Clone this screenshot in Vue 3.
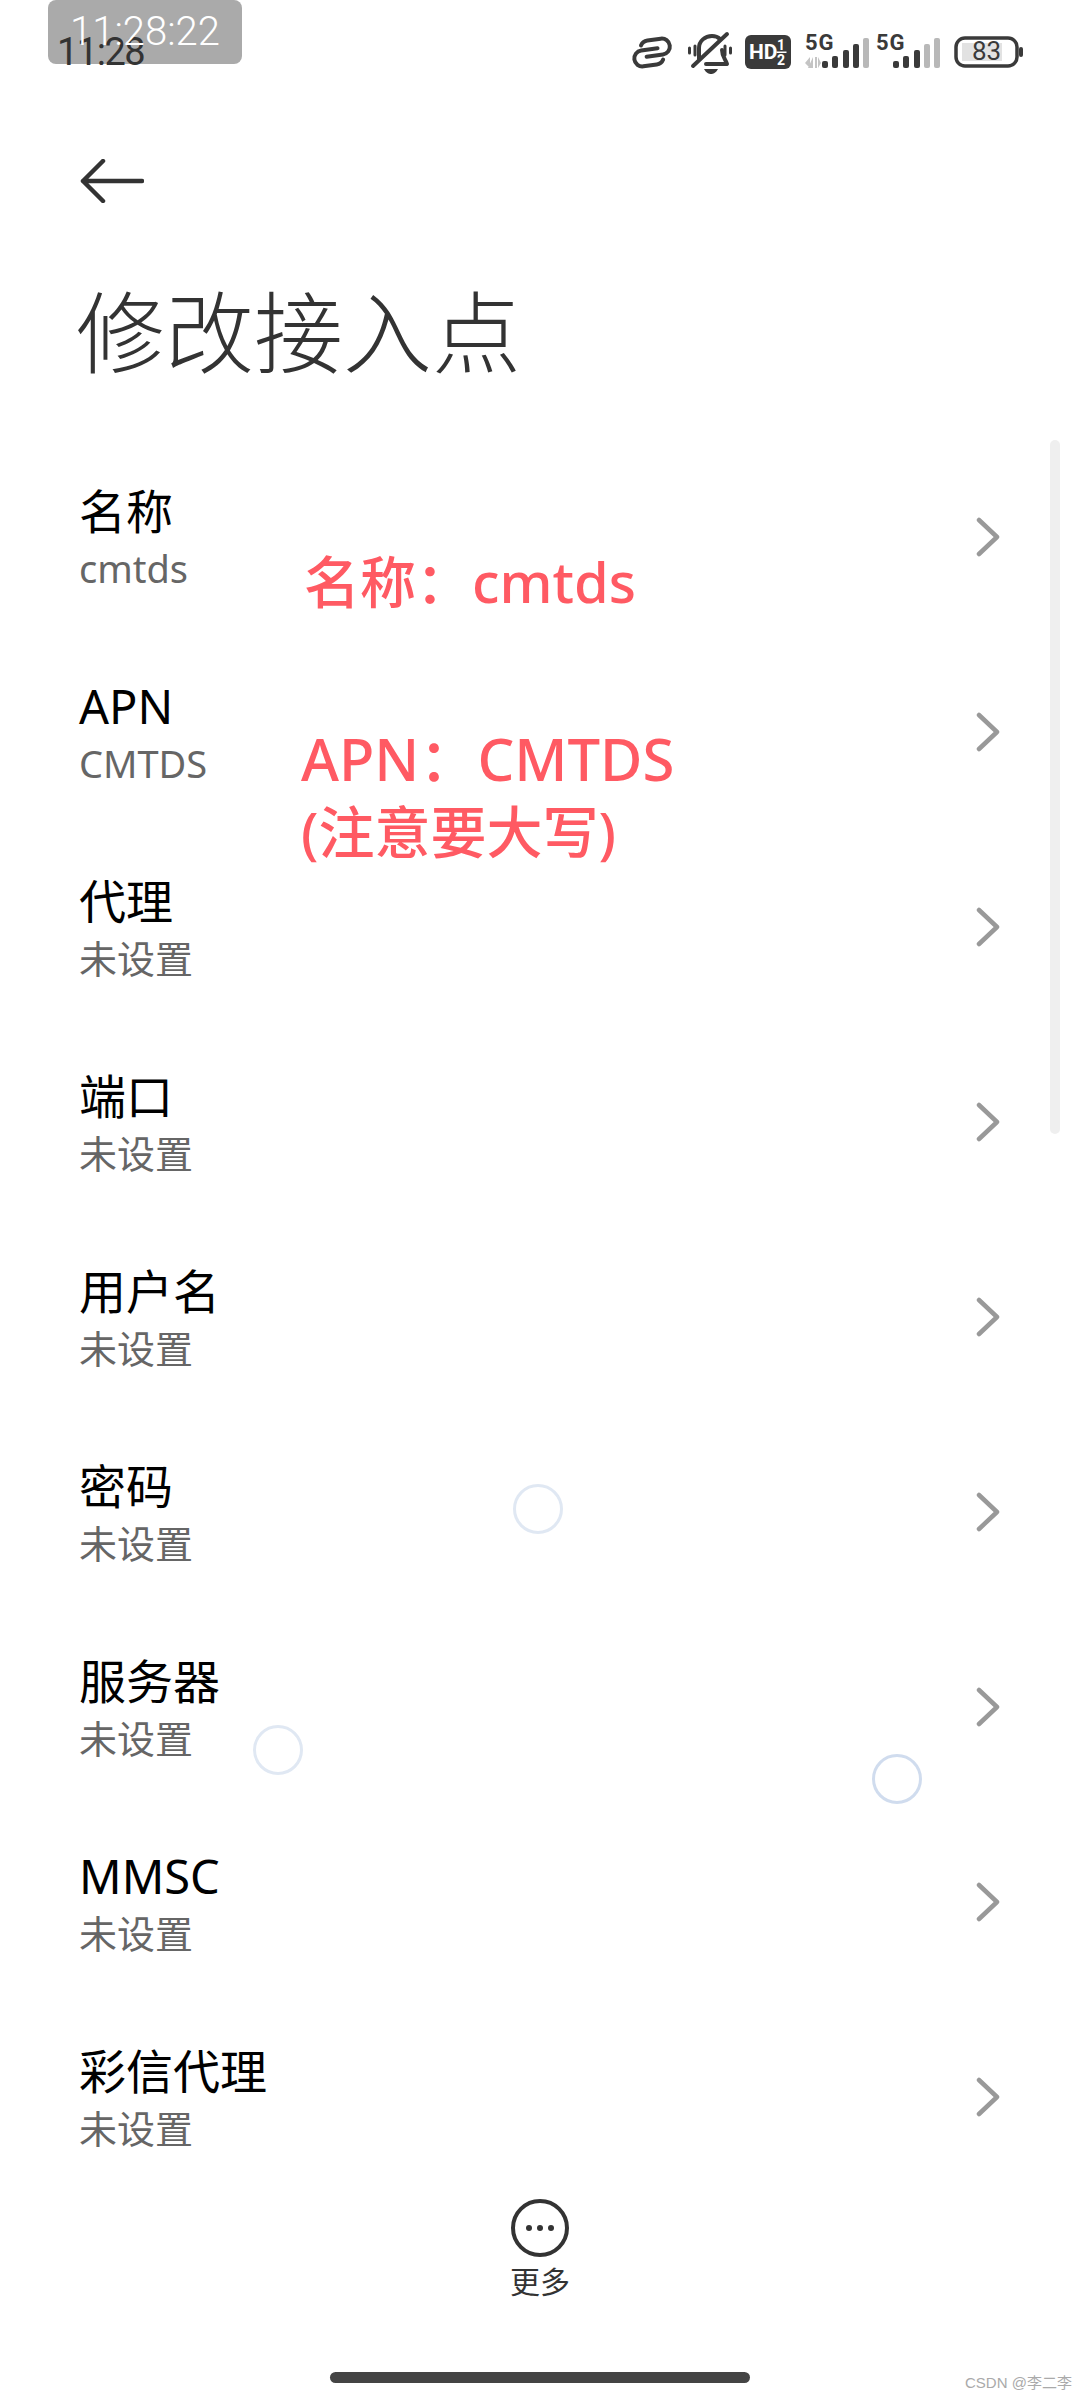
<template>
  <div class="screen">
    <div class="status">
      <span class="clock">11:28</span>
      <div class="status-icons">
        <svg width="57" height="48" viewBox="0 0 57 48" fill="none">
          <g transform="rotate(-8 21 24)" stroke="#3a3a3a" stroke-width="4" stroke-linecap="round">
            <path d="M27 21H10.500a8 8 0 0 0 0 16H24a8 8 0 0 0 7-4" />
            <path d="M15 28H31.500a8 8 0 0 0 0-16H18a8 8 0 0 0-7 4" />
          </g>
        </svg>
        <svg width="57" height="48" viewBox="0 0 57 48" fill="none">
          <g stroke="#3a3a3a" stroke-width="3" stroke-linecap="round">
            <path d="M1.500 20V25M7 18V27M37 18V27M42.500 20V25" />
          </g>
          <g stroke="#3a3a3a" stroke-width="4" stroke-linecap="round" stroke-linejoin="round">
            <path d="M11 31V20C11 13 17 8 24 8C27 8 30 9 32 11" />
            <path d="M34 22C34 29 38 32 39 36H18" />
            <path d="M5 38L39 6" />
          </g>
          <path d="M16 41H30C28 45 25 46 23 46C21 46 18 45 16 41Z" fill="#3a3a3a" />
        </svg>
        <svg width="60" height="48" viewBox="0 0 60 48">
          <rect x="0" y="7" width="46" height="34" rx="6" fill="#3a3a3a" />
          <text x="4" y="31" class="hd">HD</text>
          <text x="32" y="22" class="hd-small">1</text>
          <rect x="31.500" y="23.500" width="10" height="1.500" fill="#fff" />
          <text x="32" y="37" class="hd-small">2</text>
        </svg>
        <svg width="71" height="48" viewBox="0 0 71 48">
          <text x="0" y="22" class="five-g">5G</text>
          <path d="M5 29V40L0 35ZM8 29V40L3 40Z" fill="#c4c4c4" />
          <path d="M10 29V40H12V29ZM13 29V40L16 35Z" fill="#c4c4c4" />
          <rect
            v-for="(bar, idx) in signalBars"
            :key="idx"
            :x="bar.x"
            :y="40 - bar.h"
            width="6"
            :height="bar.h"
            rx="2"
            :fill="idx < 4 ? '#3a3a3a' : '#b8b8b8'"
          />
        </svg>
        <svg width="78" height="48" viewBox="0 0 78 48">
          <text x="0" y="22" class="five-g">5G</text>
          <rect
            v-for="(bar, idx) in signalBars"
            :key="idx"
            :x="bar.x"
            :y="40 - bar.h"
            width="6"
            :height="bar.h"
            rx="2"
            :fill="idx < 3 ? '#3a3a3a' : '#b8b8b8'"
          />
        </svg>
        <svg width="70" height="48" viewBox="0 0 70 48">
          <rect x="2" y="10" width="61" height="28" rx="9" fill="none" stroke="#3a3a3a" stroke-width="3.500" />
          <rect x="8" y="15" width="40" height="18" fill="#e2e2e2" />
          <text x="18" y="32" class="batt">83</text>
          <rect x="65" y="19" width="4" height="10" rx="2" fill="#3a3a3a" />
        </svg>
      </div>
    </div>

    <div class="back">
      <svg width="64" height="44" viewBox="0 0 64 44" fill="none" stroke="#333" stroke-width="4.500" stroke-linecap="round" stroke-linejoin="round">
        <path d="M62 22H3M23 2L3 22L23 42" />
      </svg>
    </div>

    <h1 class="title">修改接入点</h1>

    <ul class="list">
      <li v-for="item in items" :key="item.name" class="row">
        <div class="row-text">
          <div class="row-name">{{ item.name }}</div>
          <div class="row-value">{{ item.value }}</div>
        </div>
        <svg class="chevron" width="24" height="40" viewBox="0 0 24 40" fill="none" stroke="#999" stroke-width="4.500" stroke-linecap="round" stroke-linejoin="round">
          <path d="M3 3L21 20L3 37" />
        </svg>
      </li>
    </ul>

    <div class="more">
      <svg width="60" height="60" viewBox="0 0 60 60">
        <circle cx="30" cy="30" r="27" fill="none" stroke="#333" stroke-width="4" />
        <circle cx="19" cy="30" r="3" fill="#333" />
        <circle cx="30" cy="30" r="3" fill="#333" />
        <circle cx="41" cy="30" r="3" fill="#333" />
      </svg>
      <span class="more-text">更多</span>
    </div>

    <div class="home-bar"></div>

    <!-- stuff drawn over the screenshot -->
    <div class="time-pill"><span class="time-pill-text">11:28:22</span></div>
    <div class="scrollbar"></div>
    <div class="note note-name">名称：cmtds</div>
    <div class="note note-apn">
      <div class="note-big">APN：CMTDS</div>
      <div>(注意要大写)</div>
    </div>
    <div
      v-for="(t, idx) in touches"
      :key="idx"
      class="touch"
      :style="{ left: t.x + 'px', top: t.y + 'px', borderColor: t.color }"
    ></div>
    <div class="watermark">CSDN @李二李</div>
  </div>
</template>

<script setup>
const signalBars = [
  { x: 17, h: 7 },
  { x: 27, h: 12 },
  { x: 38, h: 18 },
  { x: 48, h: 24 },
  { x: 58, h: 30 },
];

const items = [
  { name: "名称", value: "cmtds" },
  { name: "APN", value: "CMTDS" },
  { name: "代理", value: "未设置" },
  { name: "端口", value: "未设置" },
  { name: "用户名", value: "未设置" },
  { name: "密码", value: "未设置" },
  { name: "服务器", value: "未设置" },
  { name: "MMSC", value: "未设置" },
  { name: "彩信代理", value: "未设置" },
];

const touches = [
  { x: 513, y: 1484, color: "#e0e8f3" },
  { x: 253, y: 1725, color: "#e0e8f3" },
  { x: 872, y: 1754, color: "#d0dcee" },
];
</script>

<style scoped>
.screen {
  position: relative;
  width: 1080px;
  height: 2400px;
  overflow: hidden;
  background: #fff;
  font-family: "Noto Sans", "Noto Sans CJK SC", sans-serif;
  color: #000;
}

.status {
  position: relative;
  z-index: 1;
  display: flex;
  justify-content: space-between;
  align-items: center;
  height: 48px;
  padding: 28px 56px 0 57px;
}

.clock {
  font-family: "Roboto", sans-serif;
  font-size: 38px;
  line-height: 48px;
  letter-spacing: -1.500px;
  color: #333;
}

.status-icons {
  display: flex;
}

.hd {
  font: 700 21px "Roboto", sans-serif;
  fill: #fff;
}

.hd-small {
  font: 700 14px "Roboto", sans-serif;
  fill: #fff;
}

.five-g {
  font: 700 22px "Roboto", sans-serif;
  letter-spacing: 1px;
  fill: #3a3a3a;
}

.batt {
  font: 400 26px "Roboto", sans-serif;
  fill: #3a3a3a;
}

.back {
  display: flex;
  padding: 83px 0 0 80px;
}

.title {
  margin: 74px 0 0 76px;
  font-size: 89px;
  line-height: 110px;
  font-weight: 300;
  color: #333;
}

.list {
  margin: 52px 0 0;
  padding: 0;
  list-style: none;
}

.row {
  display: flex;
  justify-content: space-between;
  align-items: center;
  height: 195px;
  padding: 0 80px 0 79px;
}

.row-text {
  padding-top: 3px;
}

.row-name {
  font-size: 47px;
  line-height: 60px;
}

.row-value {
  font-size: 38px;
  line-height: 54px;
  color: #666;
}

.more {
  display: flex;
  flex-direction: column;
  align-items: center;
  padding-top: 4px;
}

.more-text {
  margin-top: 2px;
  font-size: 30px;
  line-height: 44px;
  color: #333;
}

.home-bar {
  width: 420px;
  height: 11px;
  margin: 68px auto 0;
  border-radius: 6px;
  background: #444;
}

.time-pill {
  position: absolute;
  left: 48px;
  top: 0;
  width: 194px;
  height: 64px;
  border-radius: 8px;
  background: #aaa;
  font-family: "Roboto", sans-serif;
  font-size: 40px;
  line-height: 64px;
  text-align: center;
  font-weight: 300;
}

.time-pill-text {
  position: relative;
  z-index: 2;
  color: #fff;
}

.scrollbar {
  position: absolute;
  left: 1050px;
  top: 440px;
  width: 10px;
  height: 694px;
  border-radius: 5px;
  background: #efefef;
}

.note {
  position: absolute;
  font-size: 56px;
  font-weight: 500;
  color: #ff5a63;
  white-space: nowrap;
}

.note-name {
  left: 304px;
  top: 543px;
  line-height: 76px;
}

.note-apn {
  left: 301px;
  top: 723px;
  line-height: 72px;
}

.note-big {
  font-size: 58px;
}

.touch {
  position: absolute;
  width: 50px;
  height: 50px;
  box-sizing: border-box;
  border: 3px solid;
  border-radius: 50%;
}

.watermark {
  position: absolute;
  left: 965px;
  top: 2372px;
  font-family: "Liberation Sans", "Noto Sans CJK SC", sans-serif;
  font-size: 15px;
  line-height: 22px;
  color: #aaa;
  white-space: nowrap;
}
</style>
